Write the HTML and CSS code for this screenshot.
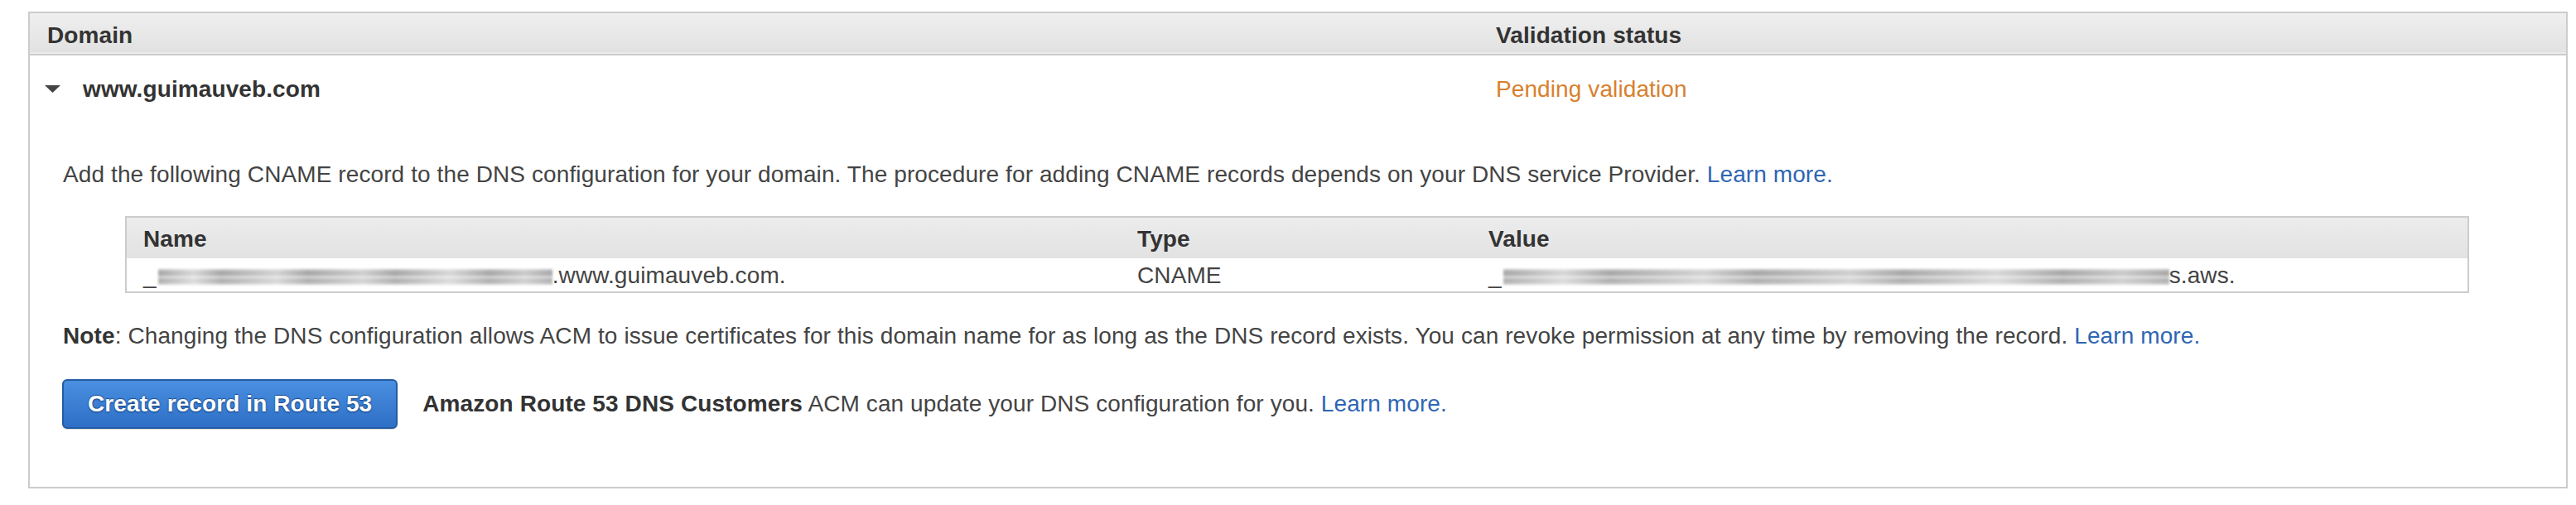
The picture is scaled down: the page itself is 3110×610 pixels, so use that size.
FILE: index.html
```html
<!DOCTYPE html>
<html>
<head>
<meta charset="utf-8">
<link rel="stylesheet" href="styles.css">
</head>
<body>
<div class="page">
  <div class="panel">
    <div class="grid head">
      <div class="hcell">Domain</div>
      <div class="hcell">Validation status</div>
    </div>
    <div class="grid row">
      <div class="dcell">
        <svg class="caret" width="19" height="9" viewBox="0 0 19 9"><polygon points="0,0 19,0 9.5,9" fill="#444"/></svg>
        <span class="domain">www.guimauveb.com</span>
      </div>
      <div class="scell pending">Pending validation</div>
    </div>
    <div class="detail">
      <p class="intro">Add the following CNAME record to the DNS configuration for your domain. The procedure for adding CNAME records depends on your DNS service Provider. <a class="link" href="#">Learn more.</a></p>
      <div class="rec">
        <div class="rgrid rec-head">
          <div class="rc">Name</div>
          <div class="rc">Type</div>
          <div class="rc">Value</div>
        </div>
        <div class="rgrid rec-row">
          <div class="rc">_<span class="blur blur-name"></span>.www.guimauveb.com.</div>
          <div class="rc">CNAME</div>
          <div class="rc">_<span class="blur blur-value"></span>s.aws.</div>
        </div>
      </div>
      <p class="note"><b>Note</b>: Changing the DNS configuration allows ACM to issue certificates for this domain name for as long as the DNS record exists. You can revoke permission at any time by removing the record. <a class="link" href="#">Learn more.</a></p>
      <div class="actions">
        <button class="btn">Create record in Route 53</button>
        <p class="r53"><b>Amazon Route 53 DNS Customers</b> ACM can update your DNS configuration for you. <a class="link" href="#">Learn more.</a></p>
      </div>
    </div>
  </div>
</div>
</body>
</html>
```
FILE: styles.css
```css
html, body {
  margin: 0;
  padding: 0;
  background: #fff;
}
body {
  font-family: "Liberation Sans", Arial, Helvetica, sans-serif;
  font-size: 28px;
  color: #444;
  letter-spacing: 0.1px;
}
.page {
  padding: 14px 10px 0 34px;
}
.panel {
  border: 2px solid #cccccc;
  height: 576px;
  box-sizing: border-box;
}
.grid {
  display: grid;
  grid-template-columns: 1749px 1fr;
}
.head {
  background: linear-gradient(#efefef, #e1e1e1);
  border-bottom: 2px solid #cbcbcb;
  box-shadow: inset 0 -2px 0 #ececec;
  padding-top: 4px;
  line-height: 45px;
  font-weight: bold;
  color: #333;
}
.hcell {
  padding-left: 21px;
}
.row {
  padding-top: 25px;
  padding-bottom: 35px;
  line-height: 32px;
}
.dcell {
  display: flex;
  align-items: center;
  padding-left: 18px;
  gap: 27px;
}
.caret {
  display: block;
  margin-top: -2px;
}
.domain {
  font-weight: bold;
  color: #333;
}
.scell {
  padding-left: 21px;
}
.pending {
  color: #d9802d;
}
.detail {
  padding: 36px 40px 0 40px;
}
.intro, .note, .r53 {
  margin: 0;
  line-height: 32px;
}
.link {
  color: #2f65b3;
  text-decoration: none;
}
.rec {
  margin: 34px 77px 0 75px;
  border: 2px solid #cccccc;
}
.rgrid {
  display: grid;
  grid-template-columns: 1200px 424px 1fr;
}
.rc {
  padding-left: 20px;
  white-space: nowrap;
}
.rec-head {
  background: linear-gradient(#ececec, #e2e2e2);
  font-weight: bold;
  color: #333;
  padding-top: 3px;
  padding-bottom: 1px;
  line-height: 45px;
}
.rec-row {
  background: #fff;
  padding-top: 2px;
  line-height: 38px;
}
.blur {
  display: inline-block;
  height: 19px;
  vertical-align: -2px;
  filter: blur(1.6px);
  background:
    linear-gradient(90deg, rgba(255,255,255,0) 0, rgba(255,255,255,0.55) 9%, rgba(255,255,255,0) 16%, rgba(255,255,255,0.5) 30%, rgba(255,255,255,0) 38%, rgba(255,255,255,0.45) 52%, rgba(255,255,255,0) 60%, rgba(255,255,255,0.55) 74%, rgba(255,255,255,0) 84%, rgba(255,255,255,0.4) 93%, rgba(255,255,255,0) 100%),
    linear-gradient(#c4c4c4, #9d9d9d 30%, #d8d8d8 52%, #a6a6a6 72%, #cfcfcf);
}
.blur-name {
  width: 476px;
  margin-left: 2px;
}
.blur-value {
  width: 804px;
  margin-left: 2px;
}
.note {
  margin-top: 36px;
}
.note b {
  color: #333;
}
.actions {
  display: flex;
  align-items: center;
  gap: 30px;
  margin-top: 36px;
  margin-left: -1px;
}
.btn {
  font-family: "Liberation Sans", Arial, Helvetica, sans-serif;
  font-size: 28px;
  font-weight: bold;
  letter-spacing: 0.1px;
  color: #fff;
  height: 60px;
  padding: 0 29px;
  line-height: 56px;
  border: 2px solid #235ba3;
  border-radius: 6px;
  background: linear-gradient(#4a8fe0, #2d6fc6);
  text-shadow: 0 1px 2px #123f7c, 0 -1px 1px #1d4f92;
  box-shadow: 0 1px 1px rgba(0,0,0,0.15);
}
.r53 b {
  color: #333;
}
```
